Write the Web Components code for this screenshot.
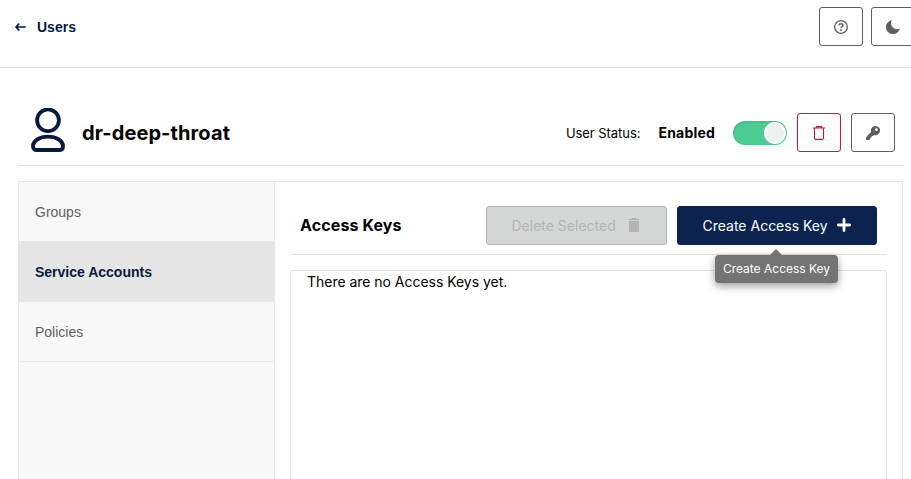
<!DOCTYPE html>
<html lang="en">
<head>
<meta charset="utf-8">
<title>Users</title>
<style>
html, body { margin: 0; height: 100%; overflow: hidden; background: #fff; }
body { font-family: Inter, "Liberation Sans", sans-serif; font-size: 14px; color: #000; }
</style>
</head>
<body>
<users-page></users-page>
<script>
const define = (name, html) => {
  const template = document.createElement('template');
  template.innerHTML = html;
  customElements.define(name, class extends HTMLElement {
    constructor() {
      super();
      this.attachShadow({ mode: 'open' }).append(template.content.cloneNode(true));
    }
  });
};

define('icon-button', `
<style>
:host { display: flex; box-sizing: border-box; width: 44px; height: 39px; flex: none; align-items: center; justify-content: center;
  border: 1px solid var(--tone, #5e5e5e); border-radius: 3px; color: var(--tone, #5e5e5e); background: #fff; }
::slotted(svg) { display: block; }
</style><slot></slot>`);

define('text-button', `
<style>
:host { display: flex; box-sizing: border-box; height: 39px; width: 200px; flex: none; align-items: center; justify-content: space-between; padding: 0 25px 0 24.5px;
  border: 1px solid #0c2350; border-radius: 3px; background: #0c2350; color: #fff; font-size: 14px; line-height: 17px; white-space: nowrap; position: relative; }
:host([disabled]) { width: 181px; background: #d5d7d7; border-color: #b4b4b4; color: #b4b4b4; }
::slotted(svg) { display: block; }
</style><slot></slot>`);

define('tool-tip', `
<style>
:host { position: absolute; z-index: 2; top: 48px; left: 37px; width: 123px; height: 28px; box-sizing: border-box; border-radius: 4px;
  background: #737373; color: #fff; font-size: 12px; line-height: 28px; text-align: center; box-shadow: 0 3px 8px rgba(0,0,0,.4); }
:host::before { content: ""; position: absolute; left: 55px; top: -6px; border: 6px solid transparent; border-top: 0; border-bottom-color: #737373; }
</style><slot></slot>`);

define('toggle-switch', `
<style>
:host { display: flex; box-sizing: border-box; width: 54px; height: 24px; padding: 1px; justify-content: flex-end; border-radius: 12px; background: #4ccb92; box-shadow: inset 0 1px 3px rgba(0,0,0,.12); }
span { width: 22px; height: 22px; box-sizing: border-box; border: 2px solid #fff; border-radius: 50%; background: #edf1f2; }
</style><span></span>`);

define('page-header', `
<style>
:host { display: flex; height: 67px; border-bottom: 1px solid #e2e2e2; padding-left: 15px; justify-content: space-between; }
nav { display: flex; align-items: center; gap: 11px; height: 54px; color: #07193e; font: bold 14px/16px "Liberation Sans", sans-serif; }
nav svg { margin-bottom: 1px; }
.actions { display: flex; gap: 8px; padding-top: 7px; margin-right: -4px; }
</style>
<nav><svg width="11" height="8" viewBox="0 0 11 8" fill="none" stroke="currentColor" stroke-width="1.7" stroke-linecap="round" stroke-linejoin="round"><path d="M10.2 4H1M3.7 1.2 1 4l2.7 2.8"/></svg><span>Users</span></nav>
<div class="actions">
<icon-button><svg width="14" height="14" viewBox="0 0 14 14" fill="none" stroke="currentColor"><circle cx="7" cy="7" r="6.3" stroke-width="1.3"/><path d="M5 5.4C5.1 3.3 9 3.3 9 5.4 9 6.7 7 6.8 7 8.1" stroke-width="1.5"/><path d="M6.1 9.3h1.7v1.6H6.1z" fill="currentColor" stroke="none"/></svg></icon-button>
<icon-button><svg width="14" height="14" viewBox="0 0 14 14" fill="currentColor"><path d="M5.8.2A7 7 0 1 0 13.8 8.6 6.1 6.1 0 0 1 5.8.2Z"/></svg></icon-button>
</div>`);

define('user-header', `
<style>
:host { display: flex; align-items: center; box-sizing: border-box; height: 66px; margin: 32px 8px 0 18px; border-bottom: 1px solid #e2e2e2; padding: 0 8px 0 13px; }
.person { margin-bottom: 5px; }
h1 { margin: 0 auto 0 17px; font-size: 20px; line-height: 24px; font-weight: 700; letter-spacing: .1px; color: #000; }
.state { font-size: 13px; line-height: 16px; letter-spacing: -.05px; }
b { margin: 0 18px; font-size: 14px; line-height: 17px; letter-spacing: .2px; }
icon-button { margin-left: 10px; }
.red { --tone: #c51b3f; }
</style>
<svg class="person" width="34" height="44" viewBox="0 0 34 44" fill="none" stroke="#07193e" stroke-width="3.8"><circle cx="17" cy="12.3" r="10.9"/><path d="M2 38c0-5 6.5-9.300 15-9.300S32 33 32 38c0 2.500-1 4-3 4H5c-2 0-3-1.500-3-4Z"/></svg>
<h1>dr-deep-throat</h1>
<span class="state">User Status:</span><b>Enabled</b><toggle-switch></toggle-switch>
<icon-button class="red"><svg width="12" height="14" viewBox="0 0 12 14" fill="none" stroke="currentColor" stroke-width="1.1"><path d="M0 2h12M3.300 1.700V.6h5.400v1.100M1.500 2v10.200q0 1.200 1.200 1.200h6.600q1.200 0 1.200-1.200V2"/></svg></icon-button>
<icon-button><svg width="14" height="14" viewBox="0 0 14 14" fill="currentColor"><path fill-rule="evenodd" d="M9.400 0a4.600 4.600 0 1 1-1.300 9L7 10.100H5.700v1.300H4.300v1.400L3.200 14H0v-2.800l5.100-5.100A4.600 4.600 0 0 1 9.400 0Zm1 2.200a1.400 1.400 0 1 0 .01 0Z"/></svg></icon-button>`);

define('side-tab', `
<style>
:host { display: block; box-sizing: border-box; height: 60px; padding: 0 16px; border-bottom: 1px solid #e7e7e7; font: 14px/60px "Liberation Sans", sans-serif; color: #5e5e5e; }
:host([selected]) { background: #e5e5e5; color: #07193e; font-weight: bold; }
</style><slot></slot>`);

define('keys-panel', `
<style>
:host { display: flex; flex-direction: column; flex: 1; padding: 14px 15px 0; }
header { display: flex; align-items: center; gap: 10px; box-sizing: border-box; height: 59px; padding: 0 10px; border-bottom: 1px solid #e2e2e2; }
h2 { margin: 0 auto 0 0; font-size: 16px; line-height: 20px; letter-spacing: .12px; }
.list { flex: 1; margin-top: 15px; border: 1px solid #e2e2e2; border-bottom: 0; border-radius: 3px 3px 0 0; padding: 2px 16px 0; font-size: 14px; line-height: 18px; letter-spacing: -.03px; }
</style>
<header><h2>Access Keys</h2>
<text-button disabled><span>Delete Selected</span><svg style="margin-right:1px" width="12" height="14" viewBox="0 0 12 14" fill="currentColor"><path d="M1 3h10v9.500q0 1.500-1.500 1.500h-7Q1 14 1 12.500ZM.4.9h3L4 0h4l.6.9h3v1.400H.4Z"/></svg></text-button>
<text-button><span>Create Access Key</span><svg width="14" height="14" viewBox="0 0 14 14" stroke="currentColor" stroke-width="2.800" stroke-linecap="round"><path d="M7 1.400v11.200M1.400 7h11.200"/></svg><tool-tip>Create Access Key</tool-tip></text-button>
</header>
<div class="list">There are no Access Keys yet.</div>`);

define('account-tabs', `
<style>
:host { display: flex; flex: 1; box-sizing: border-box; margin: 15px 8px 0 18px; border: 1px solid #e7e7e7; border-bottom: 0; }
nav { width: 255px; flex: none; background: #f8f8f8; border-right: 1px solid #e7e7e7; }
</style>
<nav><side-tab>Groups</side-tab><side-tab selected>Service Accounts</side-tab><side-tab>Policies</side-tab></nav>
<keys-panel></keys-panel>`);

define('users-page', `
<style>:host { display: flex; flex-direction: column; height: 100vh; }</style>
<page-header></page-header><user-header></user-header><account-tabs></account-tabs>`);
</script>
</body>
</html>
